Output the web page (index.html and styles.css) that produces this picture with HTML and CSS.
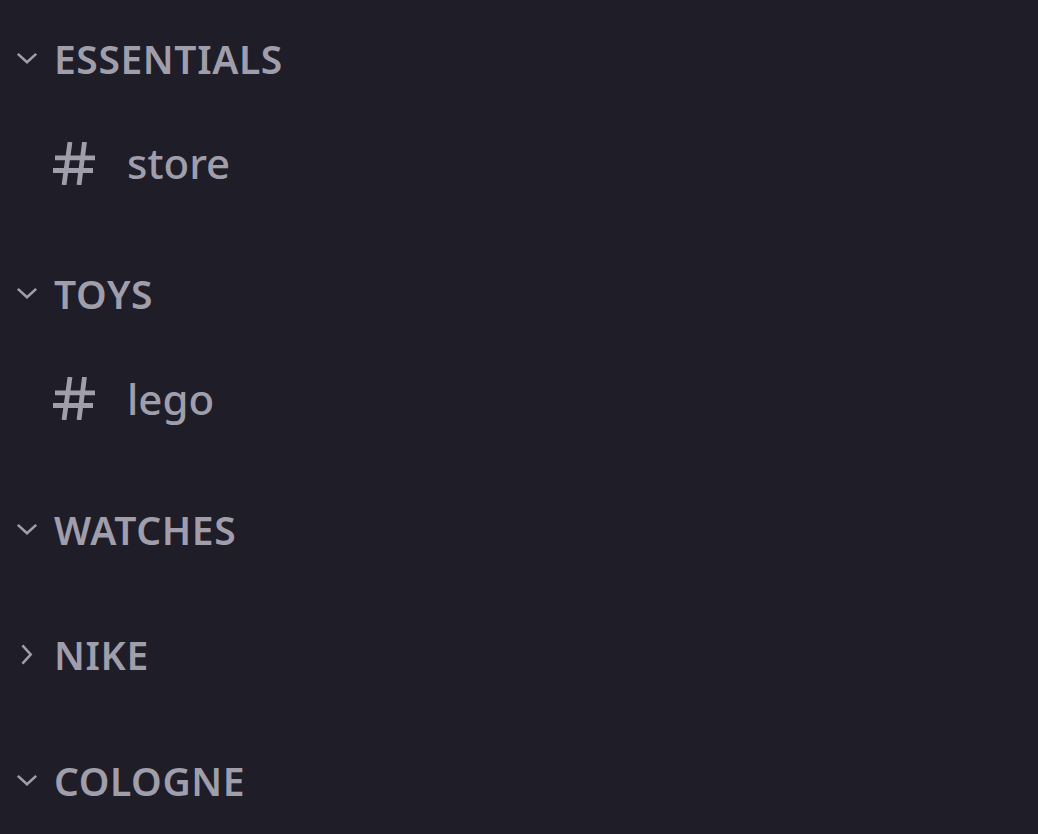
FILE: index.html
```html
<!DOCTYPE html>
<html>
<head>
<meta charset="utf-8">
<link rel="stylesheet" href="styles.css">
</head>
<body>
<nav class="channels">
  <section class="category">
    <div class="cat-header">
      <svg class="chev" viewBox="0 0 24 14"><path d="M2 2 L12 11 L22 2"/></svg>
      <span class="cat-name">ESSENTIALS</span>
    </div>
    <div class="channel">
      <svg class="hash" viewBox="0 0 42 43"><path d="M2 15.8H42M0 28.5H40M17 0L11 43M31.5 0L26 43"/></svg>
      <span class="ch-name">store</span>
    </div>
  </section>
  <section class="category">
    <div class="cat-header">
      <svg class="chev" viewBox="0 0 24 14"><path d="M2 2 L12 11 L22 2"/></svg>
      <span class="cat-name">TOYS</span>
    </div>
    <div class="channel">
      <svg class="hash" viewBox="0 0 42 43"><path d="M2 15.8H42M0 28.5H40M17 0L11 43M31.5 0L26 43"/></svg>
      <span class="ch-name">lego</span>
    </div>
  </section>
  <section class="category">
    <div class="cat-header">
      <svg class="chev" viewBox="0 0 24 14"><path d="M2 2 L12 11 L22 2"/></svg>
      <span class="cat-name">WATCHES</span>
    </div>
  </section>
  <section class="category">
    <div class="cat-header">
      <svg class="chev right" viewBox="0 0 24 14"><path d="M2 2 L12 11 L22 2"/></svg>
      <span class="cat-name">NIKE</span>
    </div>
  </section>
  <section class="category">
    <div class="cat-header">
      <svg class="chev" viewBox="0 0 24 14"><path d="M2 2 L12 11 L22 2"/></svg>
      <span class="cat-name">COLOGNE</span>
    </div>
  </section>
</nav>
</body>
</html>
```
FILE: styles.css
```css
html, body {
  margin: 0;
  padding: 0;
  background: #1e1d28;
  height: 100%;
}
body {
  font-family: "Noto Sans", "DejaVu Sans", sans-serif;
  color: #a09eab;
  overflow: hidden;
}
.channels {
  display: flex;
  flex-direction: column;
  gap: 25.5px;
  padding-top: 8px;
}
.category {
  display: flex;
  flex-direction: column;
}
.cat-header {
  height: 100px;
  display: flex;
  align-items: center;
  padding-left: 16px;
}
.chev {
  width: 22px;
  height: 13px;
  fill: none;
  stroke: #a09eab;
  stroke-width: 2.8;
  margin-right: 16px;
  flex: none;
}
.chev.right {
  transform: rotate(-90deg);
}
.cat-name {
  font-size: 39px;
  font-weight: 600;
  line-height: 1;
  letter-spacing: 0.6px;
}
.channel {
  height: 110px;
  display: flex;
  align-items: center;
  padding-left: 53px;
}
.hash {
  width: 42px;
  height: 43px;
  fill: none;
  stroke: #a09eab;
  stroke-width: 4.8;
  margin-right: 32px;
  flex: none;
}
.ch-name {
  font-size: 42px;
  font-weight: 500;
  line-height: 1;
}
```
